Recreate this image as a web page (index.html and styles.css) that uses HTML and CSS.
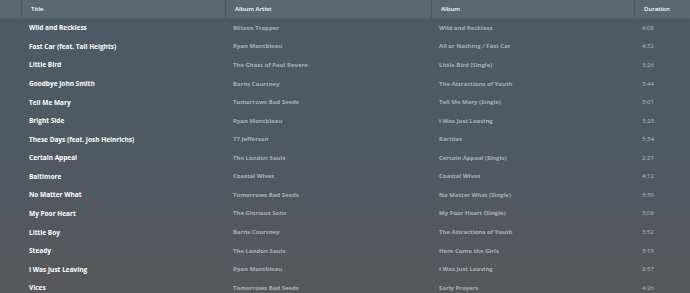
FILE: index.html
```html
<!DOCTYPE html>
<html>
<head>
<meta charset="utf-8">
<link rel="stylesheet" href="styles.css">
</head>
<body>
<div class="table">
  <div class="row head">
    <div class="gutter"></div>
    <div class="c title">Title</div>
    <div class="c artist">Album Artist</div>
    <div class="c album">Album</div>
    <div class="c dur">Duration</div>
  </div>
  <div class="row"><div class="gutter"></div><div class="c title">Wild and Reckless</div><div class="c artist">Blitzen Trapper</div><div class="c album">Wild and Reckless</div><div class="c dur">4:08</div></div>
  <div class="row"><div class="gutter"></div><div class="c title">Fast Car (feat. Tall Heights)</div><div class="c artist">Ryan Montbleau</div><div class="c album">All or Nothing / Fast Car</div><div class="c dur">4:32</div></div>
  <div class="row"><div class="gutter"></div><div class="c title">Little Bird</div><div class="c artist">The Ghost of Paul Revere</div><div class="c album">Little Bird (Single)</div><div class="c dur">3:26</div></div>
  <div class="row"><div class="gutter"></div><div class="c title">Goodbye John Smith</div><div class="c artist">Barns Courtney</div><div class="c album">The Attractions of Youth</div><div class="c dur">3:44</div></div>
  <div class="row"><div class="gutter"></div><div class="c title">Tell Me Mary</div><div class="c artist">Tomorrows Bad Seeds</div><div class="c album">Tell Me Mary (Single)</div><div class="c dur">3:01</div></div>
  <div class="row"><div class="gutter"></div><div class="c title">Bright Side</div><div class="c artist">Ryan Montbleau</div><div class="c album">I Was Just Leaving</div><div class="c dur">3:23</div></div>
  <div class="row"><div class="gutter"></div><div class="c title">These Days (feat. Josh Heinrichs)</div><div class="c artist">77 Jefferson</div><div class="c album">Rarities</div><div class="c dur">5:34</div></div>
  <div class="row"><div class="gutter"></div><div class="c title">Certain Appeal</div><div class="c artist">The London Souls</div><div class="c album">Certain Appeal (Single)</div><div class="c dur">2:27</div></div>
  <div class="row"><div class="gutter"></div><div class="c title">Baltimore</div><div class="c artist">Coastal Wives</div><div class="c album">Coastal Wives</div><div class="c dur">4:12</div></div>
  <div class="row"><div class="gutter"></div><div class="c title">No Matter What</div><div class="c artist">Tomorrows Bad Seeds</div><div class="c album">No Matter What (Single)</div><div class="c dur">3:30</div></div>
  <div class="row"><div class="gutter"></div><div class="c title">My Poor Heart</div><div class="c artist">The Glorious Sons</div><div class="c album">My Poor Heart (Single)</div><div class="c dur">3:08</div></div>
  <div class="row"><div class="gutter"></div><div class="c title">Little Boy</div><div class="c artist">Barns Courtney</div><div class="c album">The Attractions of Youth</div><div class="c dur">3:52</div></div>
  <div class="row"><div class="gutter"></div><div class="c title">Steady</div><div class="c artist">The London Souls</div><div class="c album">Here Come the Girls</div><div class="c dur">3:19</div></div>
  <div class="row"><div class="gutter"></div><div class="c title">I Was Just Leaving</div><div class="c artist">Ryan Montbleau</div><div class="c album">I Was Just Leaving</div><div class="c dur">2:57</div></div>
  <div class="row"><div class="gutter"></div><div class="c title">Vices</div><div class="c artist">Tomorrows Bad Seeds</div><div class="c album">Early Prayers</div><div class="c dur">4:26</div></div>
</div>
</body>
</html>
```
FILE: styles.css
```css
html, body {
  margin: 0;
  padding: 0;
  height: 100%;
  overflow: hidden;
}
body {
  background: linear-gradient(180deg, #4c5b66 0%, #505963 45%, #57585b 100%);
  font-family: "Open Sans", "DejaVu Sans", sans-serif;
  font-size: 6px;
  font-weight: 700;
}
.table {
  display: flex;
  flex-direction: column;
}
.row {
  display: grid;
  grid-template-columns: 21px 204px 206px 203px 1fr;
  height: 18.57px;
  align-items: center;
}
.row.head {
  background: #5a6871;
  border-bottom: 1px solid #526068;
  box-sizing: border-box;
}
.row.head .c, .row.head .gutter {
  border-left: 1px solid #4a5760;
  height: 100%;
  display: flex;
  align-items: center;
  color: #ffffff;
  font-size: 6px;
  font-weight: 600;
}
.row.head .gutter { border-left: none; }
.row.head .c { padding-left: 9px; }
.c {
  padding-left: 8px;
  white-space: nowrap;
  overflow: hidden;
}
.title { color: #ffffff; font-size: 6.5px; }
.artist, .album { color: #a9afb5; }
.dur { color: #b6bbc0; font-weight: 400; }
```
